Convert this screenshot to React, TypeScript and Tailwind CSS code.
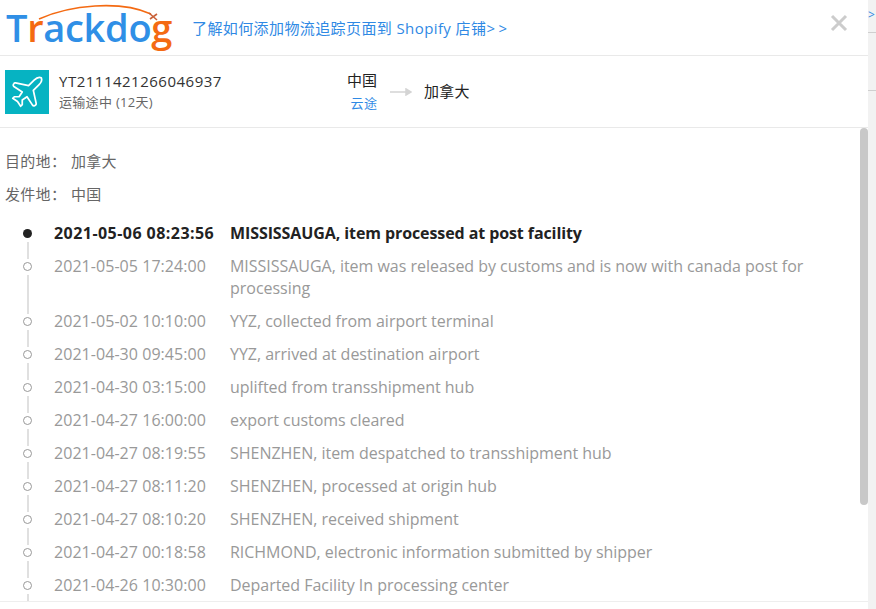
import { Plane } from "lucide-react";

const font = { fontFamily: '"Open Sans", "Noto Sans CJK SC", sans-serif' };

const events = [
  { time: "2021-05-05 17:24:00", text: "MISSISSAUGA, item was released by customs and is now with canada post for processing" },
  { time: "2021-05-02 10:10:00", text: "YYZ, collected from airport terminal" },
  { time: "2021-04-30 09:45:00", text: "YYZ, arrived at destination airport" },
  { time: "2021-04-30 03:15:00", text: "uplifted from transshipment hub" },
  { time: "2021-04-27 16:00:00", text: "export customs cleared" },
  { time: "2021-04-27 08:19:55", text: "SHENZHEN, item despatched to transshipment hub" },
  { time: "2021-04-27 08:11:20", text: "SHENZHEN, processed at origin hub" },
  { time: "2021-04-27 08:10:20", text: "SHENZHEN, received shipment" },
  { time: "2021-04-27 00:18:58", text: "RICHMOND, electronic information submitted by shipper" },
  { time: "2021-04-26 10:30:00", text: "Departed Facility In processing center" },
];

function Logo() {
  return (
    <div className="relative h-[48px] w-[168px] shrink-0">
      <div className="ml-[1px] mt-[1px] whitespace-nowrap text-[38px] font-semibold leading-[44px] tracking-[-0.3px] text-[#2f8fe6]">
        T<span className="text-[#f46a12]">r</span>ackdo<span className="text-[#f46a12]">g</span>
      </div>
      <svg className="absolute left-0 top-0" width="168" height="20" viewBox="0 0 168 20">
        <path d="M34 15 C 65 1, 115 -4, 146 10" fill="none" stroke="#f46a12" strokeWidth="1.6" />
        <path d="M144 9 L152 16 M152 10 L145 15" stroke="#c9623a" strokeWidth="1.6" />
      </svg>
    </div>
  );
}

function TimelineRail({ active }: { active?: boolean }) {
  return (
    <div className="-mb-[4px] flex w-[49px] shrink-0 flex-col items-start pt-[7px]">
      {active ? (
        <span className="ml-[18px] h-[9px] w-[9px] shrink-0 rounded-full bg-[#222222]" />
      ) : (
        <span className="ml-[18px] h-[9px] w-[9px] shrink-0 rounded-full border border-[#999999] bg-white" />
      )}
      <span className="ml-[22px] mt-[4px] w-[2px] flex-1 bg-[#e0e0e0]" />
    </div>
  );
}

export default function App() {
  return (
    <div className="flex h-[609px] w-[876px] overflow-hidden bg-[#f2f2f2]" style={font}>
      <div className="flex h-full w-[868px] shrink-0 flex-col bg-white">
        {/* header */}
        <div className="flex h-[56px] shrink-0 items-center border-b border-[#e9e9e9] pl-[5px] pr-[20px]">
          <Logo />
          <a className="ml-[19px] mt-[2px] text-[15px] tracking-[0.4px] text-[#2f89e4]">
            了解如何添加物流追踪页面到 Shopify 店铺<span className="tracking-[3.5px]">&gt;&gt;</span>
          </a>
          <svg className="mb-[10px] ml-auto" width="18" height="18" viewBox="0 0 18 18">
            <path d="M2 2 L16 16 M16 2 L2 16" stroke="#cccccc" strokeWidth="3" />
          </svg>
        </div>

        {/* shipment summary */}
        <div className="flex h-[72px] shrink-0 items-center border-b border-[#e9e9e9] pl-[5px]">
          <div className="flex h-[44px] w-[44px] items-center justify-center bg-[#06b3c2]">
            <Plane size={38} strokeWidth={1.1} className="text-white" />
          </div>
          <div className="mb-[1px] ml-[10px] w-[288px]">
            <div className="text-[15px] leading-[20px] tracking-[0.5px] text-[#333333]">YT2111421266046937</div>
            <div className="mt-[2px] text-[13px] leading-[18px] tracking-[0.3px] text-[#666666]">运输途中 (12天)</div>
          </div>
          <div className="mb-[1px] flex w-[30px] flex-col items-center">
            <div className="text-[15px] leading-[20px] text-[#222222]">中国</div>
            <div className="mt-[4px] whitespace-nowrap pl-[4px] text-[13px] leading-[18px] tracking-[0.5px] text-[#2f89e4]">云途</div>
          </div>
          <svg className="ml-[13px]" width="22" height="8" viewBox="0 0 22 8">
            <path d="M0 4 H20 M16 1 L21 4 L16 7 Z" stroke="#d4d4d4" strokeWidth="1.5" fill="#d4d4d4" />
          </svg>
          <div className="ml-[12px] text-[15px] tracking-[0.3px] text-[#222222]">加拿大</div>
        </div>

        {/* detail */}
        <div className="relative flex-1 overflow-hidden">
          <div className="pl-[5px] pr-[24px] pt-[23px] text-[15px] tracking-[0.3px] text-[#666666]">
            <div className="flex leading-[20px]">
              <span className="w-[66px]">目的地：</span>
              <span>加拿大</span>
            </div>
            <div className="mt-[13px] flex leading-[20px]">
              <span className="w-[66px]">发件地：</span>
              <span>中国</span>
            </div>

            <div className="mt-[18px] tracking-[-0.025px]">
              <div className="flex text-[16px] font-bold leading-[22px] text-[#222222]">
                <TimelineRail active />
                <div className="w-[176px] shrink-0 tracking-[0.45px]">2021-05-06 08:23:56</div>
                <div className="pb-[11px] tracking-[-0.09px]">MISSISSAUGA, item processed at post facility</div>
              </div>
              {events.map((e) => (
                <div key={e.time} className="flex text-[16px] leading-[22px] text-[#999999]">
                  <TimelineRail />
                  <div className="w-[176px] shrink-0 tracking-[0.05px]">{e.time}</div>
                  <div className="w-[590px] pb-[11px]">{e.text}</div>
                </div>
              ))}
            </div>
          </div>
          {/* scrollbar */}
          <div className="absolute right-0 top-0 h-[377px] w-[8px] rounded-[4px] bg-[#c8c8c8]" />
          <div className="absolute bottom-0 left-0 right-0 h-[8px] border-t border-[#eeeeee] bg-white" />
        </div>
      </div>

      {/* strip of the page behind the dialog */}
      <div className="flex w-[8px] flex-col">
        <div className="h-[33px] shrink-0 overflow-hidden border-b border-[#cfcfcf] pt-[7px] text-[12px] leading-[16px] text-[#2f89e4]">&gt;</div>
        <div className="h-[58px] shrink-0 border-b border-[#cfcfcf]" />
      </div>
    </div>
  );
}
